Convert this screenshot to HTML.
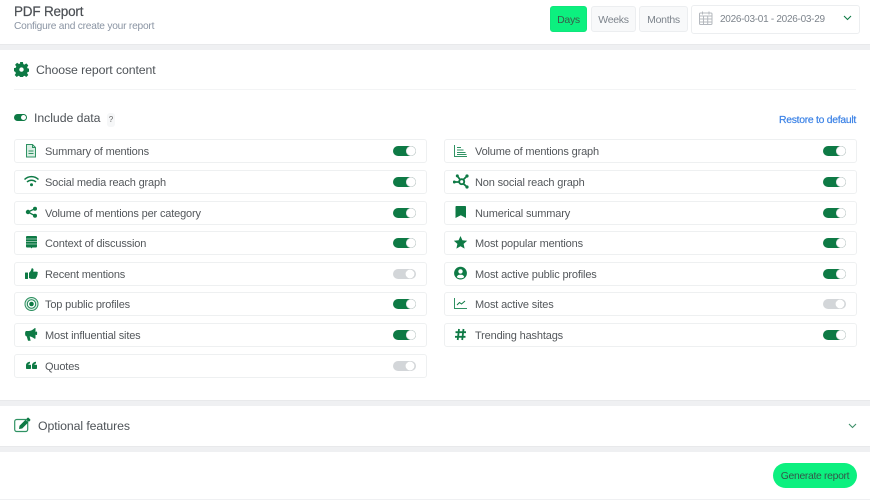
<!DOCTYPE html>
<html><head><meta charset="utf-8"><style>
html,body{margin:0;padding:0;background:#fff}
body{width:870px;height:500px;position:relative;overflow:hidden;font-family:"Liberation Sans",sans-serif;color:#4e5358}
#p{position:absolute;left:0;top:0;width:870px;height:500px;filter:blur(.3px)}
.a{position:absolute;white-space:nowrap}
.band{position:absolute;left:0;width:870px;background:#eff0f2}
.row{position:absolute;width:411px;height:22px;border:1px solid #eef0f1;border-radius:3px;background:#fff;box-sizing:content-box}
.row span{position:absolute;left:30px;top:6px;font-size:11px;line-height:13px;letter-spacing:-.16px;color:#53575b;white-space:nowrap}
.row svg{position:absolute;left:8px;top:3px;width:17px;height:17px;fill:#0e7a45}
.t{position:absolute;right:10px;top:6px;width:23px;height:10px;border-radius:5px;background:#0e7a45}
.t:after{content:"";position:absolute;right:0;top:0;width:10px;height:10px;border-radius:50%;background:#fff;box-shadow:0 0 0 .5px #c4c8cb inset}
.t.off{background:#d3d6d9}
.t.off:after{right:auto;left:12px}
.btn{position:absolute;top:6px;height:24px;line-height:26px;text-align:center;font-size:10.5px;letter-spacing:-.3px;border-radius:3px;background:#f8f9fa;border:1px solid #eceef0;color:#7d848c;box-sizing:content-box}
</style></head><body><div id="p">
<div class="a" style="left:14px;top:4px;font-size:13.5px;line-height:16px;letter-spacing:-.2px;color:#4b4f54;-webkit-text-stroke:.2px #4b4f54">PDF Report</div>
<div class="a" style="left:14px;top:20px;font-size:10.2px;line-height:13px;letter-spacing:-.22px;color:#8a94a3">Configure and create your report</div>
<div class="btn" style="left:550px;width:35px;background:#0cf07f;border-color:#0fe67c;color:#3b5a4b">Days</div>
<div class="btn" style="left:591px;width:43px">Weeks</div>
<div class="btn" style="left:639px;width:47px">Months</div>
<div class="a" style="left:691px;top:5px;width:167px;height:27px;border:1px solid #eceef0;border-radius:3px"></div>
<svg class="a" style="left:699px;top:11px" width="14" height="14" viewBox="0 0 14 14" fill="none" stroke="#b4b8be" stroke-width="1"><rect x=".5" y="2" width="12.500" height="11.500" rx="1"/><path d="M.5 5h12.500M.5 8h12.500M.5 11h12.500M4.500 5v8.500M8.700 5v8.500M3.500 .5v3M10 .5v3"/></svg>
<div class="a" style="left:720px;top:13px;font-size:10px;line-height:13px;letter-spacing:-.28px;color:#7d848c">2026-03-01 - 2026-03-29</div>
<svg class="a" style="left:843px;top:15px" width="9" height="6" viewBox="0 0 9 6" fill="none" stroke="#0e7a45" stroke-width="1.100"><path d="M1 1l3.500 3.500L8 1"/></svg>

<div class="band" style="top:44px;height:6px;border-top:1px solid #e8e9eb;box-sizing:border-box"></div>
<svg class="a" style="left:14px;top:62px;fill:#0e7a45" width="15" height="15" viewBox="0 0 15 15"><path fill-rule="evenodd" d="M6.100 0h2.800l.4 2.100 1.200.5 1.800-1.200 2 2-1.200 1.800.5 1.200 2.100.4v2.800l-2.100.4-.5 1.200 1.200 1.800-2 2-1.800-1.200-1.200.5-.4 2.100H6.100l-.4-2.100-1.200-.5-1.800 1.200-2-2 1.200-1.800-.5-1.200L-.3 9V6.200l2.100-.4.500-1.200L1.100 2.800l2-2 1.800 1.200 1.200-.5zM7.500 5.400a2.200 2.200 0 1 0 0 4.400 2.200 2.200 0 0 0 0-4.400z"/></svg>
<div class="a" style="left:36px;top:63px;font-size:12.3px;line-height:15px;letter-spacing:-.1px;color:#4e5358">Choose report content</div>
<div class="a" style="left:14px;top:89px;width:842px;height:1px;background:#f3f4f5"></div>
<div class="a" style="left:14px;top:114px;width:13px;height:7px;border-radius:4px;background:#0e7a45"></div>
<div class="a" style="left:21px;top:115px;width:5px;height:5px;border-radius:50%;background:#fff"></div>
<div class="a" style="left:34px;top:111px;font-size:12.3px;line-height:15px;letter-spacing:-.05px;color:#4e5358">Include data</div>
<div class="a" style="left:107px;top:113px;width:8px;height:14px;background:#f6f7f8;border-radius:3px;font-size:8px;line-height:14px;text-align:center;color:#666">?</div>
<div class="a" style="left:779px;top:114px;font-size:10.4px;line-height:13px;letter-spacing:-.28px;color:#3b82e6;-webkit-text-stroke:.2px #3b82e6">Restore to default</div>

<div class="row" style="left:14px;top:139px"><svg viewBox="0 0 17 17"><path fill="#d9eee3" stroke="#2f9263" d="M3.500 1.500h6l3 3v9.500h-9z"/><path fill="none" stroke="#2f9263" d="M9.500 1.500v3h3M5.500 8h5M5.500 10.500h5"/></svg><span>Summary of mentions</span><i class="t"></i></div>
<div class="row" style="left:14px;top:170px"><svg viewBox="0 0 17 17"><path fill="none" stroke="#0e7a45" stroke-width="1.500" d="M1.500 5.500c4-3.800 10-3.800 14 0M4 8c2.600-2.300 6.400-2.300 9 0"/><circle cx="8.500" cy="10.800" r="1.500"/></svg><span>Social media reach graph</span><i class="t"></i></div>
<div class="row" style="left:14px;top:201px"><svg viewBox="0 0 17 17"><circle cx="5" cy="7" r="2.200"/><circle cx="12" cy="3.700" r="2"/><circle cx="12" cy="10.800" r="2"/><path stroke="#0e7a45" stroke-width="1.300" d="M5 7l7-3.300M5 7l7 3.800"/></svg><span>Volume of mentions per category</span><i class="t"></i></div>
<div class="row" style="left:14px;top:231px"><svg viewBox="0 0 17 17"><path d="M3 2a1 1 0 0 1 1-1h9a1 1 0 0 1 1 1v9.500a1 1 0 0 1-1 1H9.200l-.7 1-.7-1H4a1 1 0 0 1-1-1z"/><path stroke="#fff" stroke-width=".6" d="M3 4h11M3 6.500h11M3 9h11"/></svg><span>Context of discussion</span><i class="t"></i></div>
<div class="row" style="left:14px;top:262px"><svg viewBox="0 0 17 17"><rect x="2" y="6.500" width="3" height="6.500" rx=".5"/><path d="M6 6.700c1.300-.9 2.200-2.500 2.500-4 .2-1 2.200-.5 2 1.300l-.3 1.600h3.200c1.700 0 1.800 1.800.9 2.300.5.700.3 1.500-.4 1.900.2.800-.1 1.400-.7 1.700 0 .9-.6 1.400-1.500 1.400H9c-1.200 0-2-.4-3-.9z"/></svg><span>Recent mentions</span><i class="t off"></i></div>
<div class="row" style="left:14px;top:292px"><svg viewBox="0 0 17 17"><circle cx="8.500" cy="8" r="6.500" fill="#d9eee3" stroke="#2b8f5f" stroke-width="1"/><circle cx="8.500" cy="8" r="4.200" fill="#fff" stroke="#1c8554"/><circle cx="8.500" cy="8" r="2.300"/></svg><span>Top public profiles</span><i class="t"></i></div>
<div class="row" style="left:14px;top:323px"><svg viewBox="0 0 17 17"><path d="M12.500 1v10.500l-1 .3c-1.800-1.700-3.500-2.400-5.800-2.600H3.200C1.700 9.200 1.700 4 3.200 4h2.500c2.300-.2 4-1.100 5.800-2.800z"/><path d="M3.600 9h3l1 4.800H5z"/><rect x="12.500" y="4.500" width="1.600" height="3.500" rx=".8"/></svg><span>Most influential sites</span><i class="t"></i></div>
<div class="row" style="left:14px;top:354px"><svg viewBox="0 0 17 17"><path d="M3 7.500C3 5.500 4.500 4 7 3.800v1.700c-1 .1-1.500.5-1.600 1.200h1.900c.4 0 .7.300.7.700v2.900c0 .4-.3.700-.7.700H3.700c-.4 0-.7-.3-.7-.7zM9 7.500C9 5.500 10.500 4 13 3.800v1.700c-1 .1-1.500.5-1.600 1.200h1.900c.4 0 .7.300.7.700v2.900c0 .4-.3.700-.7.700H9.700c-.4 0-.7-.3-.7-.7z"/></svg><span>Quotes</span><i class="t off"></i></div>

<div class="row" style="left:444px;top:139px"><svg viewBox="0 0 17 17"><path fill="none" stroke="#2f9263" d="M1.500 2v11.500h12.500M4 4.500h4M4 7h6.500M4 9.500h8.500M4 11.500h9.500"/></svg><span>Volume of mentions graph</span><i class="t"></i></div>
<div class="row" style="left:444px;top:170px"><svg viewBox="0 0 17 17"><path fill="none" stroke="#0e7a45" stroke-width="1.800" d="M1 8h5M4.300 1.900L7 5.500M14 2l-3.500 3.500M14 13L10.500 9.800"/><circle cx="8.700" cy="7.700" r="2.500" fill="none" stroke="#0e7a45" stroke-width="1.900"/><circle cx="4.300" cy="1.900" r="1.500"/><circle cx="1.300" cy="8" r="1.500"/><circle cx="14" cy="2" r="1.600"/><circle cx="14" cy="13" r="1.600"/></svg><span>Non social reach graph</span><i class="t"></i></div>
<div class="row" style="left:444px;top:201px"><svg viewBox="0 0 17 17"><path d="M2.500 2c0-.7.400-1 1-1h8.500c.6 0 1 .3 1 1v11l-5.200-2.700L2.500 13z"/></svg><span>Numerical summary</span><i class="t"></i></div>
<div class="row" style="left:444px;top:231px"><svg viewBox="0 0 17 17"><path d="M7.500 1l1.900 4.200 4.800.5-3.600 3.200 1 4.700-4.100-2.400-4.100 2.400 1-4.700L.8 5.700l4.800-.5z"/></svg><span>Most popular mentions</span><i class="t"></i></div>
<div class="row" style="left:444px;top:262px"><svg viewBox="0 0 17 17"><path fill-rule="evenodd" d="M7.500.7a6.400 6.400 0 1 1 0 12.800 6.400 6.400 0 0 1 0-12.800zM7.500 3.200a2.200 2.200 0 1 0 0 4.400 2.200 2.200 0 0 0 0-4.400zM3.800 11c.8 1 2.200 1.300 3.700 1.300s2.900-.3 3.700-1.300c-.4-1.500-1.700-2.300-2.700-2.300h-2c-1 0-2.300.8-2.700 2.300z"/></svg><span>Most active public profiles</span><i class="t"></i></div>
<div class="row" style="left:444px;top:292px"><svg viewBox="0 0 17 17"><path fill="none" stroke="#2f9263" d="M1.500 2v10.500h12.500"/><path fill="none" stroke="#0e7a45" d="M4 9l2.500-2.500 2 1.500 3.500-3"/></svg><span>Most active sites</span><i class="t off"></i></div>
<div class="row" style="left:444px;top:323px"><svg viewBox="0 0 17 17"><path fill="none" stroke="#0e7a45" stroke-width="1.800" d="M6 2L4.700 13M10.500 2L9.200 13M2.500 5.200H13M2 9.800h10.500"/></svg><span>Trending hashtags</span><i class="t"></i></div>

<div class="band" style="top:400px;height:6px;border-top:1px solid #e8e9eb;box-sizing:border-box"></div>
<svg class="a" style="left:14px;top:417px" width="18" height="16" viewBox="0 0 18 16"><rect x=".7" y="2.500" width="13" height="12" rx="2" fill="none" stroke="#2f9263" stroke-width="1.200"/><path fill="#0e7a45" d="M5.500 8.800l6-6 2.700 2.700-6 6-3.200.5zM12.300 2l1.200-1.200c.4-.3.800-.3 1.100 0l1.600 1.600c.3.300.3.700 0 1.100L15 4.700z"/></svg>
<div class="a" style="left:38px;top:419px;font-size:12.3px;line-height:15px;letter-spacing:-.1px;color:#4e5358">Optional features</div>
<svg class="a" style="left:848px;top:423px" width="9" height="6" viewBox="0 0 9 6" fill="none" stroke="#3d8f68" stroke-width="1.100"><path d="M1 1l3.500 3.500L8 1"/></svg>
<div class="band" style="top:446px;height:6px;border-top:1px solid #e8e9eb;box-sizing:border-box"></div>
<div class="a" style="left:773px;top:463px;width:84px;height:25px;line-height:27px;border-radius:13px;background:#0cf07f;text-align:center;font-size:10.4px;letter-spacing:-.33px;color:#33574a">Generate report</div>
<div class="a" style="left:0;top:499px;width:870px;height:1px;background:#eff0f2"></div>
</div></body></html>
